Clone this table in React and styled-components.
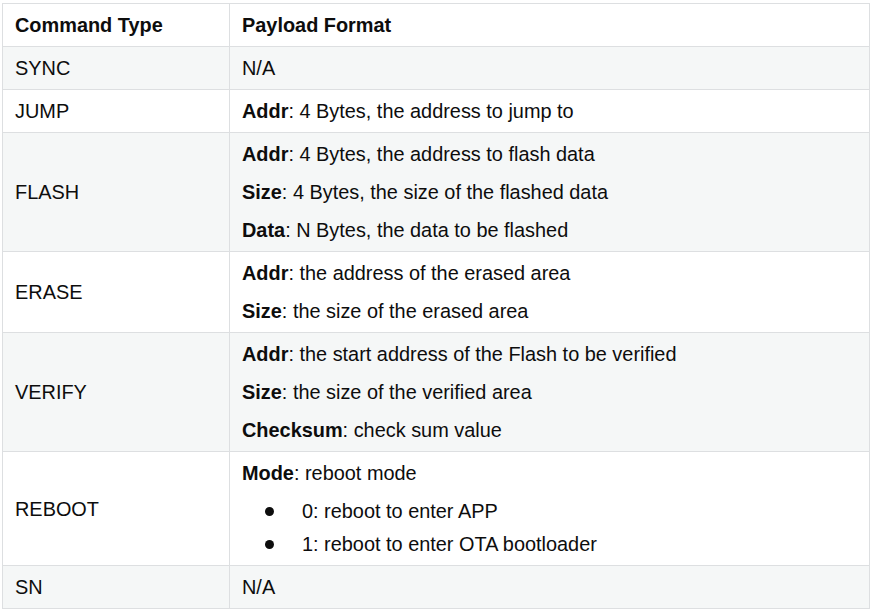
import React from 'react';
import styled, { createGlobalStyle } from 'styled-components';

const GlobalStyle = createGlobalStyle`
  body {
    margin: 0;
    background: #ffffff;
    font-family: "Liberation Sans", Arial, sans-serif;
  }
`;

const Page = styled.div`
  padding: 3px 0 0 2px;
`;

const Table = styled.table`
  width: 868px;
  border-collapse: collapse;
  font-size: 19.9px;
  color: #0d0d0d;
`;

const Row = styled.tr`
  background: ${(props) => (props.shaded ? '#f5f7f7' : '#ffffff')};
`;

const HeadCell = styled.th`
  border: 1px solid #dddfe1;
  padding: 8px 12px;
  line-height: 26px;
  text-align: left;
  font-weight: bold;
  width: ${(props) => props.width || 'auto'};
`;

const Cell = styled.td`
  border: 1px solid #dddfe1;
  padding: 8px 12px;
  line-height: 26px;
  vertical-align: middle;
`;

const Line = styled.p`
  margin: 0;
  & + & {
    margin-top: 12px;
  }
`;

const Bullets = styled.ul`
  list-style: none;
  margin: 12px 0 0;
  padding: 0 0 0 60px;
  display: flex;
  flex-direction: column;
  gap: 7px;
`;

const Bullet = styled.li`
  position: relative;
  &::before {
    content: '';
    position: absolute;
    left: -37px;
    top: 9px;
    width: 9px;
    height: 9px;
    border-radius: 50%;
    background: #0d0d0d;
  }
`;

const commands = [
  { type: 'SYNC', lines: [['', 'N/A']] },
  { type: 'JUMP', lines: [['Addr', '4 Bytes, the address to jump to']] },
  {
    type: 'FLASH',
    lines: [
      ['Addr', '4 Bytes, the address to flash data'],
      ['Size', '4 Bytes, the size of the flashed data'],
      ['Data', 'N Bytes, the data to be flashed'],
    ],
  },
  {
    type: 'ERASE',
    lines: [
      ['Addr', 'the address of the erased area'],
      ['Size', 'the size of the erased area'],
    ],
  },
  {
    type: 'VERIFY',
    lines: [
      ['Addr', 'the start address of the Flash to be verified'],
      ['Size', 'the size of the verified area'],
      ['Checksum', 'check sum value'],
    ],
  },
  {
    type: 'REBOOT',
    lines: [['Mode', 'reboot mode']],
    bullets: ['0: reboot to enter APP', '1: reboot to enter OTA bootloader'],
  },
  { type: 'SN', lines: [['', 'N/A']] },
];

function Payload({ lines, bullets }) {
  return (
    <>
      {lines.map(([label, text], i) => (
        <Line key={i}>
          {label ? (
            <>
              <b>{label}</b>: {text}
            </>
          ) : (
            text
          )}
        </Line>
      ))}
      {bullets && (
        <Bullets>
          {bullets.map((b) => (
            <Bullet key={b}>{b}</Bullet>
          ))}
        </Bullets>
      )}
    </>
  );
}

export default function App() {
  return (
    <Page>
      <GlobalStyle />
      <Table>
        <thead>
          <Row>
            <HeadCell width="202px">Command Type</HeadCell>
            <HeadCell>Payload Format</HeadCell>
          </Row>
        </thead>
        <tbody>
          {commands.map((cmd, i) => (
            <Row key={cmd.type} shaded={i % 2 === 0}>
              <Cell>{cmd.type}</Cell>
              <Cell>
                <Payload lines={cmd.lines} bullets={cmd.bullets} />
              </Cell>
            </Row>
          ))}
        </tbody>
      </Table>
    </Page>
  );
}
